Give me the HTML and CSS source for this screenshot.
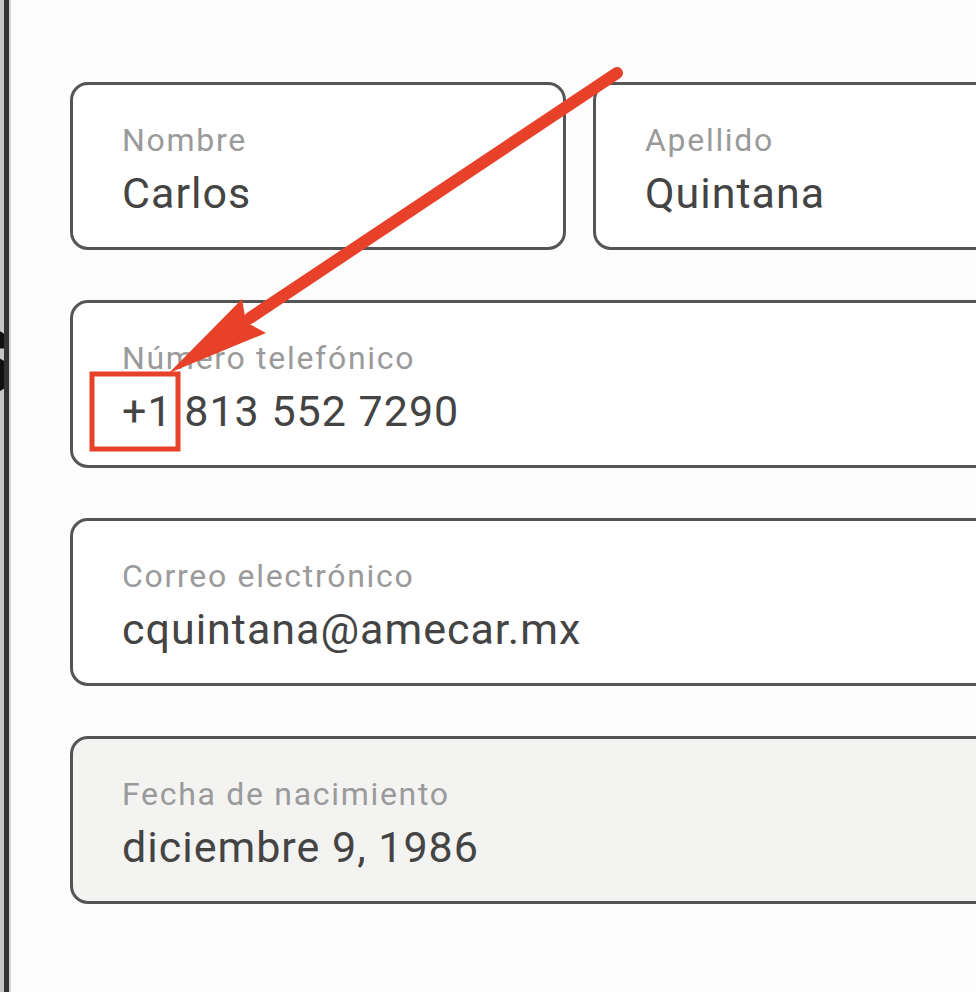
FILE: index.html
```html
<!DOCTYPE html>
<html lang="es">
<head>
    <meta charset="UTF-8">
    <meta name="viewport" content="width=device-width, initial-scale=1.0">
    <title>Perfil</title>
    <link rel="stylesheet" href="styles.css">
</head>
<body>
    <div class="page">
        <!-- edge of the previous panel, cut off -->
        <div class="side">
            <span class="side-text">s</span>
        </div>

        <div class="form">
            <div class="row">
                <div class="field field-half">
                    <div class="label">Nombre</div>
                    <div class="value">Carlos</div>
                </div>
                <div class="field field-grow">
                    <div class="label">Apellido</div>
                    <div class="value">Quintana</div>
                </div>
            </div>
            <div class="field">
                <div class="label">Número telefónico</div>
                <div class="value">+1 813 552 7290</div>
            </div>
            <div class="field">
                <div class="label">Correo electrónico</div>
                <div class="value">cquintana@amecar.mx</div>
            </div>
            <div class="field field-disabled">
                <div class="label">Fecha de nacimiento</div>
                <div class="value">diciembre 9, 1986</div>
            </div>
        </div>
    </div>

    <!-- annotation on top of the screenshot -->
    <svg class="markup" width="976" height="992" viewBox="0 0 976 992">
        <line x1="617" y1="73" x2="250" y2="318" stroke="#e8412a" stroke-width="12" stroke-linecap="round"/>
        <polygon points="169,373 242,299 246,322 266,333" fill="#e8412a"/>
        <rect x="92" y="374" width="86" height="75" fill="none" stroke="#e8412a" stroke-width="5"/>
    </svg>
</body>
</html>
```

FILE: styles.css
```css
html, body {
    margin: 0;
    height: 100%;
    overflow: hidden;
    background-color: #fdfdfd;
    font-family: Roboto, "Liberation Sans", sans-serif;
}
.page {
    display: flex;
    height: 100%;
}
.side {
    width: 4px;
    flex-shrink: 0;
    background-color: #c6c6c6;
    border-right: 5px solid #333;
    box-shadow: 2px 0 0 #d6d6d6;
    overflow: hidden;
    display: flex;
    justify-content: flex-end;
    align-items: flex-start;
    padding-top: 292px;
}
.side-text {
    font-size: 120px;
    font-weight: bold;
    line-height: 1;
    color: #111;
    margin-right: -12px;
}
.form {
    display: flex;
    flex-direction: column;
    gap: 50px;
    width: 1060px;
    flex-shrink: 0;
    padding: 82px 0 0 61px;
}
.row {
    display: flex;
    gap: 27px;
}
.field {
    box-sizing: border-box;
    height: 168px;
    border: 3px solid #555;
    border-radius: 18px;
    background-color: #fff;
    padding: 37px 0 0 49px;
}
.field-half {
    width: 496px;
    flex-shrink: 0;
}
.field-grow {
    flex: 1;
}
.field-disabled {
    background-color: #f3f3f1;
}
.label {
    font-size: 32px;
    line-height: 36px;
    letter-spacing: 1.7px;
    color: #9a9a9a;
}
.value {
    margin-top: 12px;
    font-size: 43px;
    line-height: 46px;
    letter-spacing: 1px;
    color: #444;
}
.markup {
    position: absolute;
    top: 0;
    left: 0;
    pointer-events: none;
}
```
